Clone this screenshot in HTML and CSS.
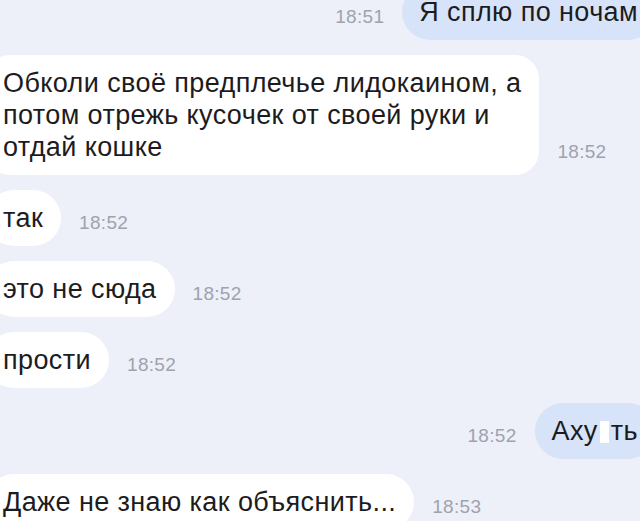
FILE: index.html
```html
<!DOCTYPE html>
<html lang="ru">
<head>
<meta charset="utf-8">
<title>Чат</title>
<link rel="stylesheet" href="styles.css">
</head>
<body>
<div class="chat">
  <div class="row row-out row-first">
    <span class="time">18:51</span>
    <div class="bubble bubble-out">Я сплю по ночам</div>
  </div>
  <div class="row row-in">
    <div class="bubble bubble-in bubble-multi">Обколи своё предплечье лидокаином, а<br>потом отрежь кусочек от своей руки и<br>отдай кошке</div>
    <span class="time">18:52</span>
  </div>
  <div class="row row-in">
    <div class="bubble bubble-in">так</div>
    <span class="time">18:52</span>
  </div>
  <div class="row row-in">
    <div class="bubble bubble-in">это не сюда</div>
    <span class="time">18:52</span>
  </div>
  <div class="row row-in">
    <div class="bubble bubble-in">прости</div>
    <span class="time">18:52</span>
  </div>
  <div class="row row-out row-second">
    <span class="time">18:52</span>
    <div class="bubble bubble-out">Аху<span class="redact"></span>ть</div>
  </div>
  <div class="row row-in">
    <div class="bubble bubble-in">Даже не знаю как объяснить...</div>
    <span class="time">18:53</span>
  </div>
</div>
</body>
</html>
```
FILE: styles.css
```css
html, body {
  margin: 0;
  padding: 0;
  width: 640px;
  height: 521px;
  overflow: hidden;
  background: #edf0f9;
}

.chat {
  display: flex;
  flex-direction: column;
  gap: 15px;
  margin-top: -16px;
  font-family: "Liberation Sans", Arial, sans-serif;
}

.row {
  display: flex;
  align-items: flex-end;
  gap: 18px;
}

.row-in {
  margin-left: -14px;
}

.row-out {
  justify-content: flex-end;
  margin-right: -16px;
}

.bubble {
  font-size: 27px;
  line-height: 32px;
  letter-spacing: 0.4px;
  color: #1c1c1e;
  padding: 12px 18px 12px 17px;
  border-radius: 28px;
  white-space: nowrap;
}

.bubble-in {
  background: #ffffff;
}

.bubble-multi {
  border-radius: 24px;
}

.bubble-out {
  background: #d7e3f8;
}

.time {
  font-size: 19px;
  line-height: 22px;
  letter-spacing: 0.3px;
  color: #9ea3ad;
  margin-bottom: 12px;
  flex: none;
}

.redact {
  display: inline-block;
  width: 9px;
  height: 22px;
  background: #ffffff;
  vertical-align: -3px;
  margin: 0 2px;
}
```
